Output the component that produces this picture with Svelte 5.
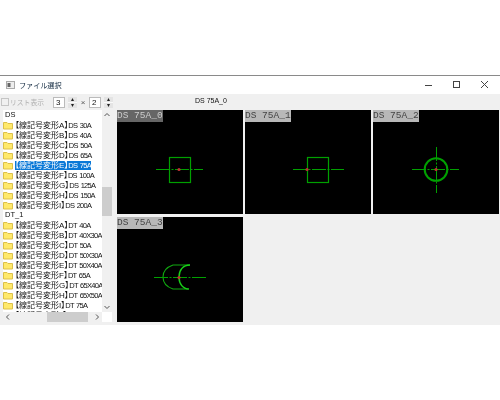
<script>
    const groups = [
        {
            name: "DS",
            items: [
                "【線記号変形A】DS 30A",
                "【線記号変形B】DS 40A",
                "【線記号変形C】DS 50A",
                "【線記号変形D】DS 65A",
                "【線記号変形E】DS 75A",
                "【線記号変形F】DS 100A",
                "【線記号変形G】DS 125A",
                "【線記号変形H】DS 150A",
                "【線記号変形I】DS 200A",
            ],
        },
        {
            name: "DT_1",
            items: [
                "【線記号変形A】DT 40A",
                "【線記号変形B】DT 40X30A",
                "【線記号変形C】DT 50A",
                "【線記号変形D】DT 50X30A",
                "【線記号変形E】DT 50X40A",
                "【線記号変形F】DT 65A",
                "【線記号変形G】DT 65X40A",
                "【線記号変形H】DT 65X50A",
                "【線記号変形I】DT 75A",
                "【線記号変形J】DT 80A",
            ],
        },
    ];
    const selected = "【線記号変形E】DS 75A";
    const cells = [
        { label: "DS 75A_0", kind: "box", active: true },
        { label: "DS 75A_1", kind: "offset" },
        { label: "DS 75A_2", kind: "circle" },
        { label: "DS 75A_3", kind: "arc" },
    ];
</script>

<div class="screen">
    <section class="window">
        <!-- Title bar -->
        <header class="titlebar">
            <svg class="appicon" width="9" height="8" viewBox="0 0 9 8">
                <rect x="0.5" y="0.5" width="8" height="7" fill="#eee" stroke="#aaa" />
                <rect x="1.5" y="2" width="3" height="4" fill="#666" />
            </svg>
            <span class="title">ファイル選択</span>
            <div class="controls">
                <svg width="10" height="10" viewBox="0 0 10 10">
                    <path d="M1 5.5H8" stroke="#444" />
                </svg>
                <svg width="10" height="10" viewBox="0 0 10 10">
                    <rect x="1.5" y="1.5" width="6" height="6" fill="none" stroke="#444" />
                </svg>
                <svg width="10" height="10" viewBox="0 0 10 10">
                    <path d="M1 1L8 8M8 1L1 8" stroke="#444" />
                </svg>
            </div>
        </header>

        <!-- Toolbar -->
        <div class="toolbar">
            <span class="check"></span>
            <span class="listlabel">リスト表示</span>
            <span class="spin first">
                <span class="num">3</span>
                <span class="arrows"><i>▴</i><i>▾</i></span>
            </span>
            <span class="times">×</span>
            <span class="spin">
                <span class="num">2</span>
                <span class="arrows"><i>▴</i><i>▾</i></span>
            </span>
            <span class="name">DS 75A_0</span>
        </div>

        <div class="body">
            <!-- File list -->
            <div class="list">
                <div class="rows">
                    {#each groups as group}
                        <div class="group">{group.name}</div>
                        {#each group.items as item}
                            {@const parts = item.split("】")}
                            <div class="row">
                                <svg class="folder" width="10" height="9" viewBox="0 0 10 9">
                                    <path d="M0.5 8V1.5H4L5 2.5H9.5V8Z" fill="#ffe96b" stroke="#dcc04a" />
                                </svg>
                                <span class="text" class:selected={item === selected}>
                                    {parts[0]}】<span class="code">{parts[1]}</span>
                                </span>
                            </div>
                        {/each}
                    {/each}
                </div>
                <div class="vbar">
                    <svg width="10" height="10" viewBox="0 0 10 10">
                        <path d="M2.5 6L5 3.5L7.5 6" fill="none" stroke="#555" />
                    </svg>
                    <span class="vtrack"><span class="vthumb"></span></span>
                    <svg width="10" height="10" viewBox="0 0 10 10">
                        <path d="M2.5 4L5 6.5L7.5 4" fill="none" stroke="#555" />
                    </svg>
                </div>
                <div class="hbar">
                    <svg width="10" height="10" viewBox="0 0 10 10">
                        <path d="M6 2.5L3.5 5L6 7.5" fill="none" stroke="#555" />
                    </svg>
                    <span class="htrack"><span class="hthumb"></span></span>
                    <svg width="10" height="10" viewBox="0 0 10 10">
                        <path d="M4 2.5L6.5 5L4 7.5" fill="none" stroke="#555" />
                    </svg>
                </div>
            </div>

            <!-- Preview grid -->
            <div class="grid">
                {#each cells as cell}
                    <div class="cell">
                        <span class="label" class:active={cell.active}>{cell.label}</span>
                        <svg class="draw" width="126" height="105" viewBox="0 0 126 105">
                            {#if cell.kind === "box"}
                                <rect x="52.5" y="47.5" width="21" height="25" fill="none" stroke="#00a000" stroke-width="1.2" />
                                <path d="M39 59.5H86" stroke="#00a000" stroke-dasharray="14 1.5 2 1.5" />
                                <circle cx="62" cy="59.5" r="1.6" fill="#b33" />
                            {:else if cell.kind === "offset"}
                                <rect x="62.5" y="47.5" width="21" height="25" fill="none" stroke="#00a000" stroke-width="1.2" />
                                <path d="M48 59.5H99" stroke="#00a000" stroke-dasharray="14 1.5 2 1.5" />
                                <circle cx="62" cy="59.5" r="1.6" fill="#b33" />
                            {:else if cell.kind === "circle"}
                                <circle cx="63" cy="59.5" r="11.3" fill="none" stroke="#00a000" stroke-width="2" />
                                <path d="M39 59.5H86M63.5 37V83" stroke="#00a000" stroke-dasharray="14 1.5 2 1.5" />
                                <circle cx="63" cy="59.5" r="1.6" fill="#b33" />
                            {:else}
                                <path d="M73 48H56C50 50 46 54 46 60C46 66 50 70 56 72H71" fill="none" stroke="#10a810" stroke-width="1.1" />
                                <path d="M73 48C66 48 62 53 62 60C62 67 66 72 72 72" fill="none" stroke="#18d018" stroke-width="1.5" />
                                <path d="M37 60.5H89" stroke="#00a000" stroke-dasharray="14 1.5 2 1.5" />
                                <circle cx="62" cy="60.5" r="1.6" fill="#b33" />
                            {/if}
                        </svg>
                    </div>
                {/each}
            </div>
        </div>
    </section>
</div>

<style>
    :global(body) {
        background: #fff;
    }
    .screen {
        width: 500px;
        height: 400px;
        padding-top: 75px;
        box-sizing: border-box;
        overflow: hidden;
        font-family: "Liberation Sans", "Noto Sans CJK JP", sans-serif;
        color: #111;
    }
    .window {
        height: 250px;
        border-top: 1px solid #8a8a8a;
        box-sizing: border-box;
        background: #f0f0f0;
        display: flex;
        flex-direction: column;
        filter: blur(0.3px);
    }

    /* Title bar */
    .titlebar {
        height: 18px;
        background: #fff;
        display: flex;
        align-items: center;
        padding-left: 6px;
        flex: none;
    }
    .appicon {
        margin-right: 4px;
    }
    .title {
        font-size: 7.2px;
        letter-spacing: -0.1px;
        color: #10283f;
    }
    .controls {
        margin-left: auto;
        display: flex;
        gap: 18px;
        padding-right: 10px;
    }

    /* Toolbar */
    .toolbar {
        height: 16px;
        display: flex;
        align-items: center;
        padding-left: 1px;
        flex: none;
        position: relative;
        font-size: 8px;
    }
    .check {
        width: 6px;
        height: 6px;
        border: 1px solid #c5c5c5;
        margin-right: 1px;
    }
    .listlabel {
        color: #b0b0b0;
        font-size: 6.8px;
    }
    .spin {
        display: flex;
        height: 11px;
        width: 24px;
        gap: 3px;
    }
    .spin.first {
        margin-left: 9px;
    }
    .num {
        width: 12px;
        background: #fff;
        border: 1px solid #bbb;
        box-sizing: border-box;
        padding-left: 2px;
        line-height: 9px;
    }
    .arrows {
        width: 9px;
        display: flex;
        flex-direction: column;
        gap: 1px;
        background: #fafafa;
    }
    .arrows i {
        flex: 1;
        font-style: normal;
        font-size: 6px;
        line-height: 5px;
        text-align: center;
        color: #222;
        background: #e4e4e4;
    }
    .times {
        width: 12px;
        text-align: center;
        color: #555;
    }
    .name {
        position: absolute;
        left: 195px;
        top: 3px;
        font-size: 7px;
    }

    /* List */
    .body {
        flex: 1;
        display: flex;
        min-height: 0;
        padding-left: 3px;
    }
    .list {
        width: 109px;
        height: 212px;
        margin-right: 5px;
        display: grid;
        grid-template-columns: 99px 10px;
        grid-template-rows: 202px 10px;
        background: #fff;
        flex: none;
    }
    .rows {
        overflow: hidden;
        min-width: 0;
        font-size: 8px;
    }
    .group {
        height: 10px;
        line-height: 10px;
        padding-left: 2px;
        font-size: 7.5px;
    }
    .row {
        height: 10px;
        display: flex;
        align-items: center;
        white-space: nowrap;
    }
    .folder {
        flex: none;
    }
    .text {
        margin-left: 2px;
        line-height: 9px;
        font-feature-settings: "palt";
    }
    .code {
        font-size: 7.5px;
        letter-spacing: -0.7px;
        word-spacing: 1px;
    }
    .text.selected {
        background: #0a78d7;
        color: #fff;
    }
    .vbar {
        display: flex;
        flex-direction: column;
        background: #f0f0f0;
    }
    .hbar {
        display: flex;
        background: #f0f0f0;
    }
    .vbar svg,
    .hbar svg {
        flex: none;
    }
    .vtrack {
        flex: 1;
        position: relative;
    }
    .vthumb {
        position: absolute;
        top: 67px;
        left: 0;
        width: 10px;
        height: 29px;
        background: #cdcdcd;
    }
    .htrack {
        flex: 1;
        position: relative;
    }
    .hthumb {
        position: absolute;
        left: 34px;
        top: 0;
        width: 41px;
        height: 10px;
        background: #cdcdcd;
    }

    /* Preview grid */
    .grid {
        flex: 1;
        display: grid;
        grid-template-columns: repeat(3, 126px);
        grid-template-rows: 104px 105px;
        column-gap: 2px;
        row-gap: 3px;
    }
    .cell {
        background: #000;
        position: relative;
        overflow: hidden;
    }
    .label {
        position: absolute;
        left: 0;
        top: 0;
        background: #b8b8b8;
        color: #444;
        font-family: "Liberation Mono", monospace;
        font-size: 9.5px;
        line-height: 12px;
    }
    .label.active {
        background: #666;
        color: #ccc;
    }
    .draw {
        display: block;
    }
</style>
